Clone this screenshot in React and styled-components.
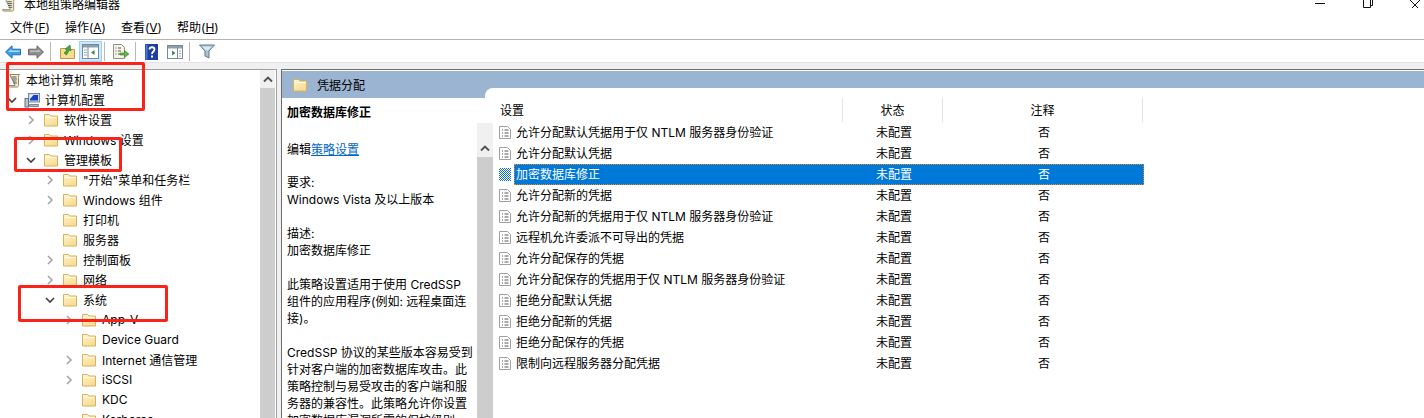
import React from 'react'
import styled, { createGlobalStyle } from 'styled-components'

const treeRows = [
  { level: 0, icon: 'root', label: '本地计算机 策略' },
  { level: 0, icon: 'pc', label: '计算机配置', arrow: 'open' },
  { level: 1, label: '软件设置', arrow: 'closed' },
  { level: 1, label: 'Windows 设置', arrow: 'closed' },
  { level: 1, label: '管理模板', arrow: 'open' },
  { level: 2, label: '"开始"菜单和任务栏', arrow: 'closed' },
  { level: 2, label: 'Windows 组件', arrow: 'closed' },
  { level: 2, label: '打印机' },
  { level: 2, label: '服务器' },
  { level: 2, label: '控制面板', arrow: 'closed' },
  { level: 2, label: '网络', arrow: 'closed' },
  { level: 2, label: '系统', arrow: 'open' },
  { level: 3, label: 'App-V', arrow: 'closed' },
  { level: 3, label: 'Device Guard' },
  { level: 3, label: 'Internet 通信管理', arrow: 'closed' },
  { level: 3, label: 'iSCSI', arrow: 'closed' },
  { level: 3, label: 'KDC' },
  { level: 3, label: 'Kerberos' },
]

const policies = [
  '允许分配默认凭据用于仅 NTLM 服务器身份验证',
  '允许分配默认凭据',
  '加密数据库修正',
  '允许分配新的凭据',
  '允许分配新的凭据用于仅 NTLM 服务器身份验证',
  '远程机允许委派不可导出的凭据',
  '允许分配保存的凭据',
  '允许分配保存的凭据用于仅 NTLM 服务器身份验证',
  '拒绝分配默认凭据',
  '拒绝分配新的凭据',
  '拒绝分配保存的凭据',
  '限制向远程服务器分配凭据',
]

function FolderIcon() {
  return (
    <svg width="16" height="14" viewBox="0 0 16 14">
      <defs>
        <linearGradient id="fold" x1="0" y1="0" x2="0.6" y2="1">
          <stop offset="0" stopColor="#fff5cf" />
          <stop offset="1" stopColor="#f8dc90" />
        </linearGradient>
      </defs>
      <path d="M1.5 1.5h5l1.5 1.5h6.5v10h-13z" fill="url(#fold)" stroke="#d9b261" />
      <path d="M2.5 4.5h11" stroke="#fffbe6" />
    </svg>
  )
}

function ScrollIcon({ size = 15 }) {
  return (
    <svg width={size} height={size} viewBox="0 0 15 15">
      <path d="M4 1.5h9.5c-1 1-1 2-1 3v8c0 1-.8 1.5-1.5 1.5H2c-1 0-1.5-.7-1.5-1.5H9c0-3-5-8-5-11z" fill="#f6eecb" stroke="#8f8668" />
      <path d="M5.5 4h5M6 6h5M6.5 8h4M7 10h4" stroke="#55585c" />
    </svg>
  )
}

function PcIcon() {
  return (
    <svg width="16" height="16" viewBox="0 0 16 16">
      <rect x="4.5" y="1.5" width="11" height="8.5" fill="#cfd6e0" stroke="#7b8794" />
      <path d="M6 3h8v5.5H6z" fill="#1440c8" />
      <path d="M6 3h3.5L6 7z" fill="#e2efff" />
      <rect x="1" y="6.5" width="3.5" height="8.5" fill="#bcc6d2" stroke="#5f7286" />
      <path d="M5.5 12.5h9v2h-9z" fill="#aebbc9" stroke="#7b8794" />
    </svg>
  )
}

function Arrow({ open }) {
  return (
    <svg width="10" height="10" viewBox="0 0 10 10">
      {open
        ? <path d="M1 3l4 4 4-4" fill="none" stroke="#404040" strokeWidth="1.6" />
        : <path d="M3 1l4 4-4 4" fill="none" stroke="#a6a6a6" strokeWidth="1.6" />}
    </svg>
  )
}

function DocIcon({ selected }) {
  return (
    <svg width="13" height="15" viewBox="0 0 13 15">
      <defs>
        <pattern id="check" width="2" height="2" patternUnits="userSpaceOnUse">
          <rect width="2" height="2" fill="#ffffff" />
          <rect width="1" height="1" fill="#0a6fd0" />
          <rect x="1" y="1" width="1" height="1" fill="#0a6fd0" />
        </pattern>
      </defs>
      {selected
        ? <rect x="0" y="1" width="12" height="13" fill="url(#check)" />
        : (
          <>
            <path d="M.5 1.5h8l3 3v9H.5z" fill="#fff" stroke="#a0a0a0" />
            <path d="M3 5h1M3 8h1M3 11h1M5.5 5h4M5.5 8h4M5.5 11h4" stroke="#505860" />
          </>
        )}
    </svg>
  )
}

function ToolbarIcons() {
  return (
    <Toolbar>
      <ToolSlot $w={16} $mr={7}>
        <svg width="16" height="14" viewBox="0 0 16 14">
          <path d="M.5 7L7 .8v3.4h8.5v5.6H7v3.4z" fill="#3f9ee8" stroke="#1c6fb5" />
          <path d="M3 7l3.5-3v1.6h8V7z" fill="#a6dcfb" />
        </svg>
      </ToolSlot>
      <ToolSlot $w={16} $mr={6}>
        <svg width="16" height="14" viewBox="0 0 16 14">
          <path d="M15.5 7L9 .8v3.4H.5v5.6H9v3.4z" fill="#8e8e8e" stroke="#6a6a6a" />
          <path d="M2 5.5h8V4l3 3H2z" fill="#bdbdbd" />
        </svg>
      </ToolSlot>
      <Sep $mr={9} />
      <ToolSlot $w={15} $mr={4}>
        <svg width="15" height="15" viewBox="0 0 15 15">
          <path d="M.5 4.5h5l1 1h8v9H.5z" fill="#f9dd8e" stroke="#b99a4c" />
          <path d="M4 9l3-3-2-1 5-4 1 6-1.600-1L6.500 11z" fill="#46a447" stroke="#2c7a30" strokeWidth=".6" />
        </svg>
      </ToolSlot>
      <ToolToggle $mr={2}>
        <svg width="17" height="15" viewBox="0 0 17 15">
          <rect x=".5" y=".5" width="16" height="14" fill="#fff" stroke="#7c8a92" />
          <rect x="1" y="1" width="15" height="2.500" fill="#8ba0ad" />
          <path d="M6 3v11" stroke="#7c8a92" />
          <path d="M2 6h3M2 8.500h3M2 11h3" stroke="#9aa6ad" />
          <path d="M12.500 6v5L9 8.500z" fill="#2f8f4a" />
        </svg>
      </ToolToggle>
      <Sep $mr={8} />
      <ToolSlot $w={16} $mr={6}>
        <svg width="16" height="15" viewBox="0 0 16 15">
          <path d="M.5.5h8l3 3v11h-11z" fill="#f8f4e4" stroke="#8d8d8d" />
          <path d="M2.500 4h1M2.500 7h1M2.500 10h1M5 4h3M5 7h3M5 10h3" stroke="#505860" />
          <path d="M7 9h4.500V6.500L16 10l-4.500 3.500V11H7z" fill="#62b346" stroke="#3d8a2a" strokeWidth=".6" />
        </svg>
      </ToolSlot>
      <Sep $mr={9} />
      <ToolSlot $w={13} $mr={9}>
        <svg width="13" height="16" viewBox="0 0 13 16">
          <rect width="13" height="16" fill="#1d3f9e" />
          <rect x=".5" y=".5" width="2" height="15" fill="#4f77d4" />
          <path d="M4.500 5.500c0-3 5-3 5 0 0 2-2.500 2-2.500 4.500" fill="none" stroke="#fff" strokeWidth="1.800" />
          <rect x="6" y="11.500" width="2" height="2" fill="#fff" />
        </svg>
      </ToolSlot>
      <ToolSlot $w={16} $mr={6}>
        <svg width="16" height="14" viewBox="0 0 16 14">
          <rect x=".5" y=".5" width="15" height="13" fill="#fff" stroke="#7c8a92" />
          <rect x="1" y="1" width="14" height="2.500" fill="#8ba0ad" />
          <path d="M10.500 3v10" stroke="#7c8a92" />
          <path d="M12 6h2M12 8.500h2M12 11h2" stroke="#9aa6ad" />
          <path d="M5 5.500v5L8.500 8z" fill="#2f8f4a" />
        </svg>
      </ToolSlot>
      <Sep $mr={9} />
      <ToolSlot $w={16} $mr={0}>
        <svg width="16" height="15" viewBox="0 0 16 15">
          <path d="M.5 1h15L10 7v7l-4-2V7z" fill="#a9c2d4" stroke="#5d7c90" />
          <path d="M3 2.500h10L9 6.500H7z" fill="#d9e8f1" />
        </svg>
      </ToolSlot>
    </Toolbar>
  )
}

function App() {
  return (
    <>
      <Global />
      <Page>
        <TitleBar>
          <TitleIcon><ScrollIcon size={14} /></TitleIcon>
          <TitleText>本地组策略编辑器</TitleText>
          <WindowButtons>
            <svg width="10" height="4" viewBox="0 0 10 4"><path d="M0 3.500h10" stroke="#111" /></svg>
            <svg width="10" height="8" viewBox="0 0 10 8"><path d="M.5 0v7.500h7V0M7.500 5.500h2V0" fill="none" stroke="#111" /></svg>
            <svg width="10" height="8" viewBox="0 0 10 8"><path d="M0 0l8 8M10 0L2 8" stroke="#111" /></svg>
          </WindowButtons>
        </TitleBar>
        <MenuBar>
          <span>文件(<u>F</u>)</span>
          <span>操作(<u>A</u>)</span>
          <span>查看(<u>V</u>)</span>
          <span>帮助(<u>H</u>)</span>
        </MenuBar>
        <ToolbarIcons />
        <Band />
        <Main>
          <TreePane>
            <TreeList>
              {treeRows.map((row) => (
                <TreeRow key={row.label} $level={row.level} $root={row.icon === 'root'}>
                  {row.icon !== 'root' && (
                    <ArrowBox>{row.arrow && <Arrow open={row.arrow === 'open'} />}</ArrowBox>
                  )}
                  <IconBox>
                    {row.icon === 'root' ? <ScrollIcon /> : row.icon === 'pc' ? <PcIcon /> : <FolderIcon />}
                  </IconBox>
                  <TreeLabel>{row.label}</TreeLabel>
                </TreeRow>
              ))}
            </TreeList>
            <ScrollBar $width={15}><ScrollArrow $height={18}><UpArrow /></ScrollArrow><Thumb /></ScrollBar>
          </TreePane>
          <Content>
            <Header>
              <FolderIcon />
              <span>凭据分配</span>
            </Header>
            <Body>
              <Desc>
                <DescTitle>加密数据库修正</DescTitle>
                <p>编辑<PolicyLink>策略设置</PolicyLink></p>
                <p>要求:<br />Windows Vista 及以上版本</p>
                <p>描述:<br />加密数据库修正</p>
                <p>此策略设置适用于使用 CredSSP<br />组件的应用程序(例如: 远程桌面连接)。</p>
                <p>CredSSP 协议的某些版本容易受到针对客户端的加密数据库攻击。此策略控制与易受攻击的客户端和服务器的兼容性。此策略允许你设置加密数据库漏洞所需的保护级别。</p>
              </Desc>
              <DescScroll $width={16}><ScrollArrow $height={34}><UpArrow /></ScrollArrow><Thumb /></DescScroll>
              <TablePane>
                <HeadRow>
                  <HeadCell $w={346} $left>设置</HeadCell>
                  <HeadCell $w={100}>状态</HeadCell>
                  <HeadCell $w={200}>注释</HeadCell>
                </HeadRow>
                {policies.map((name, i) => (
                  <PolicyRow key={name}>
                    <DocBox><DocIcon selected={i === 2} /></DocBox>
                    <RowCells $selected={i === 2}>
                      <NameCell>{name}</NameCell>
                      <ValueCell $w={100}>未配置</ValueCell>
                      <ValueCell $w={200}>否</ValueCell>
                    </RowCells>
                  </PolicyRow>
                ))}
              </TablePane>
            </Body>
          </Content>
        </Main>
        <RedBox $x={6} $y={62} $w={139} $h={49} />
        <RedBox $x={14} $y={137} $w={108} $h={35} />
        <RedBox $x={18} $y={285} $w={150} $h={37} />
      </Page>
    </>
  )
}

function UpArrow() {
  return (
    <svg width="10" height="7" viewBox="0 0 10 7">
      <path d="M1 5.500l4-4 4 4" fill="none" stroke="#505050" strokeWidth="1.800" />
    </svg>
  )
}

export default App

const Global = createGlobalStyle`
  html, body {
    margin: 0;
    height: 100%;
    overflow: hidden;
    background: #fff;
  }
  body {
    font-family: Inter, "Noto Sans CJK SC", sans-serif;
    font-size: 12px;
    color: #000;
  }
`

const Page = styled.div`
  position: relative;
  width: 1424px;
  height: 418px;
  overflow: hidden;
  display: flex;
  flex-direction: column;
`

const TitleBar = styled.div`
  height: 13px;
  flex: none;
  display: flex;
  align-items: flex-start;
  overflow: hidden;
`

const TitleIcon = styled.div`
  width: 14px;
  margin: -2px 0 0 2px;
`

const TitleText = styled.div`
  margin: -4px 0 0 8px;
  line-height: 17px;
`

const WindowButtons = styled.div`
  margin-left: auto;
  width: 105px;
  padding-right: 4px;
  display: flex;
  justify-content: space-between;
  svg {
    overflow: visible;
  }
`

const MenuBar = styled.div`
  height: 26px;
  flex: none;
  padding: 0 0 0 10px;
  display: flex;
  align-items: center;
  gap: 15px;
  border-bottom: 1px solid #b4b4b4;
  box-sizing: content-box;
  line-height: 17px;
  span {
    padding-top: 3px;
  }
`

const Toolbar = styled.div`
  height: 22px;
  flex: none;
  box-sizing: border-box;
  padding: 1px 0 0 5px;
  display: flex;
  align-items: center;
`

const ToolSlot = styled.div`
  width: ${(p) => p.$w}px;
  margin-right: ${(p) => p.$mr}px;
  display: flex;
  justify-content: center;
`

const ToolToggle = styled.div`
  width: 23px;
  height: 21px;
  box-sizing: border-box;
  margin-right: ${(p) => p.$mr}px;
  display: flex;
  align-items: center;
  justify-content: center;
  background: #cce8ff;
  border: 1px solid #99d1ff;
`

const Sep = styled.div`
  width: 1px;
  height: 19px;
  background: #b8b8b8;
  margin-right: ${(p) => p.$mr}px;
`

const Band = styled.div`
  height: 7px;
  flex: none;
  background: #f0f0f0;
  border-top: 1px solid #e4e4e4;
  box-sizing: border-box;
`

const Main = styled.div`
  flex: 1;
  min-height: 0;
  display: flex;
  background: #f0f0f0;
`

const TreePane = styled.div`
  width: 277px;
  flex: none;
  box-sizing: border-box;
  background: #fff;
  border-top: 1px solid #a0a0a0;
  border-right: 1px solid #a0a0a0;
  display: flex;
  overflow: hidden;
`

const TreeList = styled.div`
  width: 260px;
  flex: none;
`

const TreeRow = styled.div`
  height: 20px;
  display: flex;
  align-items: center;
  white-space: nowrap;
  padding-left: ${(p) => (p.$root ? 5 : 7 + p.$level * 19)}px;
`

const TreeLabel = styled.span`
  margin-bottom: 2px;
`

const ArrowBox = styled.div`
  width: 10px;
  height: 10px;
  margin-right: 7px;
  display: flex;
`

const IconBox = styled.div`
  width: 16px;
  height: 16px;
  margin-right: 5px;
  display: flex;
  align-items: center;
  justify-content: center;
`

const ScrollBar = styled.div`
  width: ${(p) => p.$width}px;
  flex: none;
  display: flex;
  flex-direction: column;
  background: #f0f0f0;
`

const DescScroll = styled(ScrollBar)`
  margin-top: 25px;
`

const ScrollArrow = styled.div`
  height: ${(p) => p.$height}px;
  flex: none;
  display: flex;
  align-items: flex-end;
  justify-content: center;
  padding-bottom: 5px;
  box-sizing: border-box;
`

const Thumb = styled.div`
  flex: 1;
  background: #cdcdcd;
`

const Content = styled.div`
  flex: 1;
  min-width: 0;
  margin-left: 4px;
  display: flex;
  flex-direction: column;
  border-top: 1px solid #6d6d6d;
  border-left: 1px solid #6d6d6d;
  background: #fff;
`

const Header = styled.div`
  height: 27px;
  margin-top: 1px;
  flex: none;
  padding-left: 10px;
  display: flex;
  align-items: center;
  gap: 9px;
  background: #9bb4d1;
`

const Body = styled.div`
  position: relative;
  flex: 1;
  min-height: 0;
  display: flex;
  &::before {
    content: '';
    position: absolute;
    top: -10px;
    left: 203px;
    right: 0;
    height: 10px;
    background: #fff;
    border-radius: 8px 0 0 0;
  }
`

const Desc = styled.div`
  width: 195px;
  flex: none;
  padding: 6px 4px 0 5px;
  box-sizing: border-box;
  line-height: 17px;
  p {
    margin: 0 0 17px;
  }
  p:first-of-type {
    margin-bottom: 16px;
  }
`

const DescTitle = styled.div`
  font-weight: 700;
  margin-bottom: 20px;
`

const PolicyLink = styled.span`
  color: #0066cc;
  text-decoration: underline;
`

const TablePane = styled.div`
  flex: 1;
  min-width: 0;
  padding-left: 4px;
  position: relative;
`

const HeadRow = styled.div`
  height: 24px;
  display: flex;
`

const HeadCell = styled.div`
  width: ${(p) => p.$w}px;
  box-sizing: border-box;
  flex: none;
  display: flex;
  align-items: center;
  justify-content: ${(p) => (p.$left ? 'flex-start' : 'center')};
  padding-left: ${(p) => (p.$left ? 3 : 0)}px;
  padding-bottom: 2px;
  border-right: 1px solid #e5e5e5;
`

const PolicyRow = styled.div`
  height: 21px;
  display: flex;
  align-items: center;
`

const DocBox = styled.div`
  width: 17px;
  flex: none;
  padding-left: 2px;
  box-sizing: border-box;
  display: flex;
`

const RowCells = styled.div`
  width: 630px;
  height: 21px;
  box-sizing: border-box;
  padding-bottom: 2px;
  display: flex;
  align-items: center;
  background: ${(p) => (p.$selected ? '#0078d7' : 'transparent')};
  color: ${(p) => (p.$selected ? '#fff' : '#000')};
  outline: ${(p) => (p.$selected ? '1px dotted #e8842c' : 'none')};
  outline-offset: -1px;
`

const NameCell = styled.div`
  width: 330px;
  flex: none;
  padding-left: 2px;
  box-sizing: border-box;
  white-space: nowrap;
`

const ValueCell = styled.div`
  width: ${(p) => p.$w}px;
  flex: none;
  text-align: center;
`

const RedBox = styled.div`
  position: absolute;
  left: ${(p) => p.$x}px;
  top: ${(p) => p.$y}px;
  width: ${(p) => p.$w}px;
  height: ${(p) => p.$h}px;
  box-sizing: border-box;
  border: 3px solid #fb2317;
  border-radius: 2px;
`
